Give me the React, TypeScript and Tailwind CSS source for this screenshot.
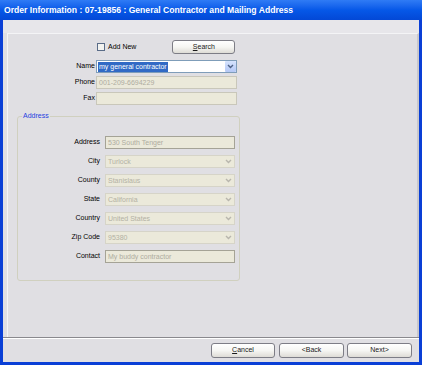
import React from 'react';

const font = { fontFamily: '"Liberation Sans", Arial, sans-serif' };

const Chevron: React.FC<{ color?: string }> = ({ color = '#b8b6ad' }) => (
  <svg width="7" height="5" viewBox="0 0 7 5">
    <path d="M1 1 L3.5 3.5 L6 1" fill="none" stroke={color} strokeWidth="1.4" />
  </svg>
);

const XpButton: React.FC<{ children: React.ReactNode; className?: string }> = ({ children, className = '' }) => (
  <div
    className={`flex items-center justify-center rounded-[3px] border border-[#7d7d86] bg-gradient-to-b from-[#ffffff] via-[#f6f6f3] to-[#dedcd6] text-[7px] text-[#1a1a1a] ${className}`}
  >
    {children}
  </div>
);

const TextBox: React.FC<{ value?: string; width: string }> = ({ value = '', width }) => (
  <div className={`${width} h-[13px] border border-[#a5a396] bg-[#ebe9da] px-[2px] text-[7px] leading-[11px] text-[#aeac9f] truncate`}>
    {value}
  </div>
);

const ComboBox: React.FC<{ value: string }> = ({ value }) => (
  <div className="w-[130px] h-[13px] border border-[#d6d4c8] bg-[#ebe9da] flex items-center">
    <span className="flex-1 px-[2px] text-[7px] leading-[11px] text-[#b3b1a4] truncate">{value}</span>
    <div className="w-[11px] h-full flex items-center justify-center">
      <Chevron />
    </div>
  </div>
);

const AddrRow: React.FC<{ label: string; children: React.ReactNode }> = ({ label, children }) => (
  <div className="flex items-center h-[13px]">
    <div className="w-[87px] text-right text-[7px] text-black pr-[5px]">{label}</div>
    {children}
  </div>
);

export default function App() {
  return (
    <div className="w-[422px] h-[365px] flex flex-col bg-[#0a3fd6] overflow-hidden" style={font}>
      {/* Title bar */}
      <div className="h-[20px] flex items-center px-[4px] bg-gradient-to-b from-[#2f7bf5] via-[#0658e8] to-[#0348d6]">
        <span className="text-white font-bold text-[8.6px]">
          Order Information : 07-19856 : General Contractor and Mailing Address
        </span>
      </div>

      {/* Client area */}
      <div className="flex-1 mx-[3px] mb-[3px] bg-[#e0dfe3] flex flex-col">
        <div className="h-[13px] bg-[#e7e6ea]" />

        {/* Main panel */}
        <div className="flex-1 ml-[4px] border-t border-l border-[#f4f4f6] border-r-2 border-r-[#c9c8cd] flex flex-col">
          {/* top fields */}
          <div className="pt-[6px] flex flex-col">
            <div className="flex items-center h-[14px]">
              <div className="ml-[89px] w-[8px] h-[8px] border border-[#5a6c88] bg-[#f3f3f0]" />
              <span className="ml-[3px] text-[7px] text-black">Add New</span>
              <XpButton className="ml-[36px] w-[63px] h-[14px]">
                <span>
                  <span className="underline">S</span>earch
                </span>
              </XpButton>
            </div>

            <div className="mt-[6px] flex flex-col gap-[3px]">
              <div className="flex items-center h-[13px]">
                <div className="w-[88px] text-right text-[7px] text-black pr-[1px]">Name</div>
                <div className="w-[141px] h-[13px] border border-[#7f9db9] bg-white flex items-center">
                  <span className="ml-[1px] bg-[#316ac5] text-white text-[7px] leading-[10px] px-[1px]">
                    my general contractor
                  </span>
                  <div className="flex-1" />
                  <div className="w-[11px] h-[11px] rounded-[1px] bg-gradient-to-b from-[#d6e3fd] to-[#b4c8f6] flex items-center justify-center">
                    <Chevron color="#4d6185" />
                  </div>
                </div>
              </div>
              <div className="flex items-center h-[13px]">
                <div className="w-[88px] text-right text-[7px] text-black pr-[1px]">Phone</div>
                <div className="w-[141px] h-[13px] border border-[#c9c7ba] bg-[#ebe9da] px-[2px] text-[7px] leading-[11px] text-[#aeac9f]">
                  001-209-6694229
                </div>
              </div>
              <div className="flex items-center h-[13px]">
                <div className="w-[88px] text-right text-[7px] text-black pr-[1px]">Fax</div>
                <div className="w-[141px] h-[13px] border border-[#c9c7ba] bg-[#ebe9da]" />
              </div>
            </div>
          </div>

          {/* Address group */}
          <div className="relative ml-[9px] mt-[11px] w-[223px] h-[165px] border border-[#d0d0bf] rounded-[3px]">
            <span className="absolute -top-[6px] left-[4px] px-[1px] bg-[#e0dfe3] text-[7px] leading-[10px] text-[#1f3ee0]">
              Address
            </span>
            <div className="pt-[19px] flex flex-col gap-[6px]">
              <AddrRow label="Address">
                <TextBox width="w-[130px]" value="530 South Tenger" />
              </AddrRow>
              <AddrRow label="City">
                <ComboBox value="Turlock" />
              </AddrRow>
              <AddrRow label="County">
                <ComboBox value="Stanislaus" />
              </AddrRow>
              <AddrRow label="State">
                <ComboBox value="California" />
              </AddrRow>
              <AddrRow label="Country">
                <ComboBox value="United States" />
              </AddrRow>
              <AddrRow label="Zip Code">
                <ComboBox value="95380" />
              </AddrRow>
              <AddrRow label="Contact">
                <TextBox width="w-[130px]" value="My buddy contractor" />
              </AddrRow>
            </div>
          </div>
        </div>

        {/* separator */}
        <div className="h-[2px] bg-[#8a898e] border-b border-white" />

        {/* footer */}
        <div className="h-[23px] flex items-center justify-end pr-[7px] gap-[4px]">
          <XpButton className="w-[64px] h-[15px]">
            <span>
              <span className="underline">C</span>ancel
            </span>
          </XpButton>
          <XpButton className="w-[65px] h-[15px] mr-[-1px]">&lt;Back</XpButton>
          <XpButton className="w-[65px] h-[15px]">Next&gt;</XpButton>
        </div>
      </div>
    </div>
  );
}
